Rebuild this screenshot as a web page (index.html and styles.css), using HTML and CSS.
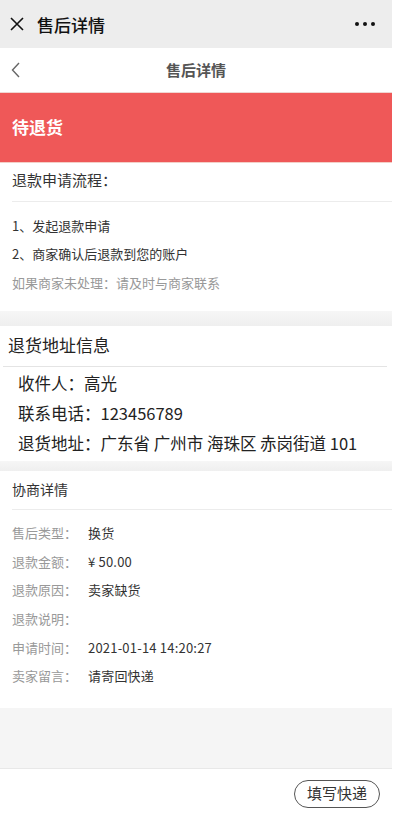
FILE: index.html
```html
<!DOCTYPE html>
<html lang="zh-CN">
<head>
    <meta charset="UTF-8">
    <meta name="viewport" content="width=device-width, initial-scale=1.0">
    <title>售后详情</title>
    <link rel="stylesheet" href="styles.css">
</head>
<body>
    <div class="page">
        <div class="titlebar">
            <svg class="close" width="14" height="14" viewBox="0 0 14 14">
                <path d="M1 1 L13 13 M13 1 L1 13" stroke="#111" stroke-width="1.6" fill="none"/>
            </svg>
            <span class="titlebar-text">售后详情</span>
            <span class="more"><i></i><i></i><i></i></span>
        </div>

        <div class="navbar">
            <svg class="back" width="10" height="16" viewBox="0 0 10 16">
                <path d="M8 1 L1.5 8 L8 15" stroke="#666" stroke-width="1.4" fill="none"/>
            </svg>
            <span class="navbar-title">售后详情</span>
        </div>

        <div class="status">待退货</div>

        <div class="section flow">
            <div class="flow-head">退款申请流程：</div>
            <div class="flow-body">
                <p>1、发起退款申请</p>
                <p>2、商家确认后退款到您的账户</p>
                <p class="muted">如果商家未处理：请及时与商家联系</p>
            </div>
        </div>

        <div class="gap"></div>

        <div class="section address">
            <div class="address-head">退货地址信息</div>
            <div class="address-body">
                <p>收件人：高光</p>
                <p>联系电话：123456789</p>
                <p>退货地址：广东省 广州市 海珠区 赤岗街道 101</p>
            </div>
        </div>

        <div class="gap small"></div>

        <div class="section detail">
            <div class="detail-head">协商详情</div>
            <div class="detail-body">
                <div class="row"><span class="label">售后类型：</span><span class="value">换货</span></div>
                <div class="row"><span class="label">退款金额：</span><span class="value">¥ 50.00</span></div>
                <div class="row"><span class="label">退款原因：</span><span class="value">卖家缺货</span></div>
                <div class="row"><span class="label">退款说明：</span><span class="value"></span></div>
                <div class="row"><span class="label">申请时间：</span><span class="value">2021-01-14 14:20:27</span></div>
                <div class="row"><span class="label">卖家留言：</span><span class="value">请寄回快递</span></div>
            </div>
        </div>

        <div class="filler"></div>

        <div class="footer">
            <button class="btn">填写快递</button>
        </div>
    </div>
</body>
</html>
```

FILE: styles.css
```css
body {
    margin: 0;
    padding: 0;
    background: #fff;
    font-family: "Noto Sans CJK SC", "Noto Sans", sans-serif;
    color: #333;
}
p {
    margin: 0;
}
.page {
    width: 392px;
    height: 825px;
    display: flex;
    flex-direction: column;
    overflow: hidden;
}
.titlebar {
    height: 48px;
    background: #ededed;
    display: flex;
    align-items: center;
    padding: 0 17px 0 10px;
    box-sizing: border-box;
}
.close {
    margin-right: 13px;
}
.titlebar-text {
    font-size: 17px;
    font-weight: 500;
    color: #111;
    flex: 1;
}
.more {
    display: flex;
    gap: 4px;
}
.more i {
    width: 4px;
    height: 4px;
    border-radius: 50%;
    background: #111;
}
.navbar {
    height: 44px;
    background: #fff;
    display: flex;
    align-items: center;
    justify-content: center;
    position: relative;
    border-bottom: 1px solid #f0d6d2;
}
.back {
    position: absolute;
    left: 11px;
    top: 14px;
}
.navbar-title {
    font-size: 15px;
    font-weight: bold;
    color: #555;
    margin-top: -2px;
}
.status {
    height: 70px;
    background: #ef5858;
    color: #fff;
    font-size: 17px;
    font-weight: bold;
    display: flex;
    align-items: center;
    padding: 0 0 2px 12px;
    box-sizing: border-box;
    border-bottom: 1px solid #f3cfc7;
}
.section {
    background: #fff;
}
.flow-head {
    height: 38px;
    line-height: 33px;
    margin-left: 12px;
    font-size: 15px;
    color: #333;
    border-bottom: 1px solid #ececec;
}
.flow-body {
    padding: 10px 12px 13px;
    font-size: 13px;
    color: #333;
}
.flow-body p {
    line-height: 28px;
}
.flow-body p.muted {
    color: #999;
    line-height: 30px;
}
.gap {
    height: 15px;
    background: linear-gradient(#f6f6f6, #efefef);
}
.gap.small {
    height: 10px;
}
.address-head {
    height: 40px;
    line-height: 38px;
    margin: 0 5px 0 3px;
    padding-left: 5px;
    font-size: 17px;
    color: #222;
    border-bottom: 1px solid #e4e4e4;
}
.address-body {
    padding: 1px 18px 3px;
    font-size: 16.5px;
    color: #222;
}
.address-body p {
    line-height: 30px;
}
.detail-head {
    height: 38px;
    line-height: 36px;
    margin-left: 12px;
    font-size: 14px;
    color: #333;
    border-bottom: 1px solid #ececec;
}
.detail-body {
    padding: 8px 12px 18px;
    font-size: 13px;
}
.row {
    display: flex;
    height: 28.7px;
    align-items: center;
}
.label {
    width: 76px;
    color: #999;
}
.value {
    color: #333;
    letter-spacing: 0.2px;
}
.filler {
    flex: 1;
    background: #f5f5f5;
    border-bottom: 1px solid #e8e8e8;
}
.footer {
    height: 56px;
    background: #fff;
    display: flex;
    justify-content: flex-end;
    align-items: flex-start;
    padding: 11px 12px 0 0;
    box-sizing: border-box;
}
.btn {
    height: 28px;
    padding: 0 12px 2px;
    border: 1px solid #555;
    border-radius: 14px;
    background: #fff;
    font-family: "Noto Sans CJK SC", sans-serif;
    font-size: 15px;
    color: #333;
    line-height: 24px;
}
```
